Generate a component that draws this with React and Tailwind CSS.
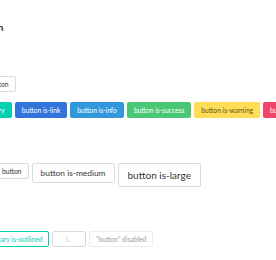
export default function App() {
  const base =
    "inline-flex items-center justify-center whitespace-nowrap rounded-[2px] border border-solid leading-none shrink-0";
  const normal = "h-[16px] px-[6px] text-[6.7px]";
  return (
    <div
      className="w-[276px] h-[260px] overflow-hidden bg-white text-[#363636]"
      style={{ fontFamily: 'Lato, "Open Sans", sans-serif' }}
    >
      <div className="pt-[21px] ml-[-27px] text-[10px] font-bold leading-[12px] text-[#363636]">
        Button
      </div>

      <div className="mt-[43px] flex ml-[-18px]">
        <span className={`${base} ${normal} border-[#dbdbdb] bg-white text-[#363636]`}>button</span>
      </div>

      <div className="mt-[10px] flex gap-[3px] ml-[-53px]">
        <span className={`${base} ${normal} border-transparent bg-[#00d1b2] text-white`}>button is-primary</span>
        <span className={`${base} ${normal} border-transparent bg-[#3273dc] text-white`}>button is-link</span>
        <span className={`${base} ${normal} border-transparent bg-[#3298dc] text-white`}>button is-info</span>
        <span className={`${base} ${normal} border-transparent bg-[#48c774] text-white`}>button is-success</span>
        <span className={`${base} ${normal} border-transparent bg-[#ffdd57] text-black/70`}>button is-warning</span>
        <span className={`${base} ${normal} border-transparent bg-[#f14668] text-white`}>button is-danger</span>
      </div>

      <div className="mt-[45px] flex items-start gap-[3px] ml-[-5px]">
        <span className={`${base} ${normal} border-[#dbdbdb] bg-white`}>button</span>
        <span className={`${base} h-[20px] px-[8px] text-[8.4px] border-[#dbdbdb] bg-white`}>button is-medium</span>
        <span className={`${base} h-[24px] px-[9px] text-[10px] border-[#dbdbdb] bg-white`}>button is-large</span>
      </div>

      <div className="mt-[44px] flex items-start gap-[3px] ml-[-48px]">
        <span className={`${base} ${normal} border-[#00d1b2] bg-white text-[#00d1b2]`}>button is-primary is-outlined</span>
        <span className={`${base} ${normal} relative border-[#dbdbdb] bg-white text-transparent`}>
          button
          <span className="absolute left-1/2 top-1/2 -ml-[3px] -mt-[3px] h-[6px] w-[6px] rounded-full border border-[#dbdbdb] border-r-transparent border-t-transparent" />
        </span>
        <span className={`${base} ${normal} border-[#dbdbdb] bg-white opacity-50`}>"button" disabled</span>
      </div>
    </div>
  );
}
